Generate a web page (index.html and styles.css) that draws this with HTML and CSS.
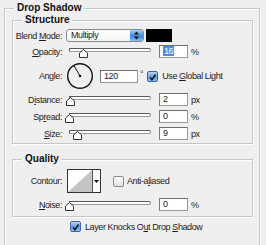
FILE: index.html
```html
<!DOCTYPE html>
<html>
<head>
<meta charset="utf-8">
<link rel="stylesheet" href="styles.css">
</head>
<body>
<div class="panel">
  <div class="legend">Drop Shadow</div>
  <div class="box structure">
    <div class="legend">Structure</div>
    <div class="row r-blend">
      <span class="label">Blend <span class="u">M</span>ode:</span>
      <div class="select">
        <span class="select-text">Multiply</span>
        <span class="stepper"><svg width="13" height="11" viewBox="0 0 13 11"><path d="M6.5 1.5 L9 4.5 H4 Z M6.5 9.5 L9 6.5 H4 Z" fill="#111"/></svg></span>
      </div>
      <div class="swatch"></div>
    </div>
    <div class="row r-opacity">
      <span class="label"><span class="u">O</span>pacity:</span>
      <div class="slider"><div class="track"></div><svg class="thumb" style="left:9.5px" width="9" height="9" viewBox="0 0 9 9"><path d="M4.5 0.5 L8.5 4 V8.5 H0.5 V4 Z" fill="#fff" stroke="#333"/></svg></div>
      <div class="field"><span class="sel">16</span></div>
      <span class="unit">%</span>
    </div>
    <div class="row r-angle">
      <span class="label">Angle:</span>
      <svg class="dial" width="28" height="28" viewBox="0 0 28 28"><circle cx="14" cy="14" r="12.3" fill="none" stroke="#111" stroke-width="1.4"/><line x1="14" y1="14" x2="8" y2="3.6" stroke="#111" stroke-width="1"/><circle cx="14" cy="14" r="1.3" fill="#111"/></svg>
      <div class="field field-angle">120</div>
      <span class="deg">°</span>
      <span class="check checked"><svg width="11" height="11" viewBox="0 0 11 11"><path d="M2.5 5.5 L4.8 8.3 L9.2 1.8" fill="none" stroke="#111" stroke-width="1.8"/></svg></span>
      <span class="check-label">Use <span class="u">G</span>lobal Light</span>
    </div>
    <div class="row r-slider">
      <span class="label">D<span class="u">i</span>stance:</span>
      <div class="slider"><div class="track"></div><svg class="thumb" style="left:-3.5px" width="9" height="9" viewBox="0 0 9 9"><path d="M4.5 0.5 L8.5 4 V8.5 H0.5 V4 Z" fill="#fff" stroke="#333"/></svg></div>
      <div class="field">2</div>
      <span class="unit">px</span>
    </div>
    <div class="row r-slider">
      <span class="label">Sp<span class="u">r</span>ead:</span>
      <div class="slider"><div class="track"></div><svg class="thumb" style="left:-4.5px" width="9" height="9" viewBox="0 0 9 9"><path d="M4.5 0.5 L8.5 4 V8.5 H0.5 V4 Z" fill="#fff" stroke="#333"/></svg></div>
      <div class="field">0</div>
      <span class="unit">%</span>
    </div>
    <div class="row r-slider">
      <span class="label"><span class="u">S</span>ize:</span>
      <div class="slider"><div class="track"></div><svg class="thumb" style="left:3.5px" width="9" height="9" viewBox="0 0 9 9"><path d="M4.5 0.5 L8.5 4 V8.5 H0.5 V4 Z" fill="#fff" stroke="#333"/></svg></div>
      <div class="field">9</div>
      <span class="unit">px</span>
    </div>
  </div>
  <div class="box quality">
    <div class="legend">Quality</div>
    <div class="row r-contour">
      <span class="label">Contour:</span>
      <div class="contour">
        <svg class="curve" width="24" height="22" viewBox="0 0 24 22"><rect width="24" height="22" fill="#fff"/><path d="M0 22 L24 0 V22 Z" fill="#c4c4c4"/></svg>
        <span class="contour-arrow"><svg width="7" height="6" viewBox="0 0 7 6"><path d="M1 2 H6 L3.5 5 Z" fill="#111"/></svg></span>
      </div>
      <span class="check"></span>
      <span class="check-label">Anti-a<span class="u">l</span>iased</span>
    </div>
    <div class="row r-noise">
      <span class="label"><span class="u">N</span>oise:</span>
      <div class="slider"><div class="track"></div><svg class="thumb" style="left:-4.5px" width="9" height="9" viewBox="0 0 9 9"><path d="M4.5 0.5 L8.5 4 V8.5 H0.5 V4 Z" fill="#fff" stroke="#333"/></svg></div>
      <div class="field">0</div>
      <span class="unit">%</span>
    </div>
  </div>
  <div class="row r-knock">
    <span class="check checked"><svg width="11" height="11" viewBox="0 0 11 11"><path d="M2.5 5.5 L4.8 8.3 L9.2 1.8" fill="none" stroke="#111" stroke-width="1.8"/></svg></span>
    <span class="check-label">Layer Knocks O<span class="u">u</span>t Drop <span class="u">S</span>hadow</span>
  </div>
</div>
</body>
</html>
```

FILE: styles.css
```css
html, body {
  margin: 0;
  padding: 0;
  background: #efefef;
  overflow: hidden;
}
body {
  font-family: "Liberation Sans", Arial, sans-serif;
  font-size: 9px;
  letter-spacing: -0.4px;
  color: #1c1c1c;
  width: 266px;
  height: 245px;
}
.panel {
  margin: 8px 6px 0 4px;
  height: 236px;
  border: 1px solid #c6c6c6;
  border-bottom: none;
  box-shadow: inset 1px 1px 0 #fff, 1px 1px 0 #fff;
  padding: 0 6px 0 7px;
}
.legend {
  width: fit-content;
  margin: -7px 0 0 2px;
  padding: 0 3px;
  background: #efefef;
  font-weight: bold;
  font-size: 10px;
  letter-spacing: 0;
  line-height: 12px;
  color: #111;
}
.box {
  border: 1px solid #c6c6c6;
  box-shadow: inset 1px 1px 0 #fff, 1px 1px 0 #fff;
}
.box .legend {
  margin-left: 9px;
}
.structure {
  margin-top: 6px;
  padding-bottom: 3px;
}
.quality {
  margin-top: 15px;
  padding-bottom: 5px;
}
.row {
  display: flex;
  align-items: center;
  height: 13px;
}
.label {
  width: 49px;
  flex: none;
  text-align: right;
  white-space: nowrap;
}
.u { text-decoration: underline; }

.r-blend { margin-top: 3px; }
.r-opacity { margin-top: 3px; }
.r-angle { margin-top: 4px; height: 28px; }
.r-slider { margin-top: 4px; }
.r-angle + .r-slider { margin-top: 3px; }
.r-contour { margin-top: 4px; height: 24px; }
.r-noise { margin-top: 5px; }
.r-knock { margin: 4px 0 0 58px; height: 11px; }

.select {
  margin-left: 4px;
  width: 78px;
  height: 13px;
  box-sizing: border-box;
  border: 1px solid #8a8a8a;
  border-radius: 3px;
  background: linear-gradient(#fff, #f4f4f4);
  display: flex;
  align-items: center;
  overflow: hidden;
}
.select-text {
  flex: 1;
  padding-left: 4px;
  line-height: 11px;
}
.stepper {
  width: 13px;
  height: 11px;
  background: linear-gradient(#a8cdf5, #4a8fe0 50%, #3a7fd6 51%, #86c0f5);
  display: flex;
}
.swatch {
  margin-left: 2px;
  width: 26px;
  height: 13px;
  background: #000;
}

.slider {
  position: relative;
  margin-left: 7px;
  width: 82px;
  height: 13px;
  flex: none;
}
.track {
  margin-top: 3px;
  height: 4px;
  box-sizing: border-box;
  border: 1px solid #5c5c5c;
  border-bottom-color: #9a9a9a;
  border-right-color: #8a8a8a;
  border-radius: 0 2px 2px 0;
  background: #fff;
}
.thumb {
  position: absolute;
  top: 4px;
}
.field {
  margin-left: 8px;
  width: 29px;
  height: 13px;
  box-sizing: border-box;
  border: 1px solid #9a9a9a;
  border-top-color: #6e6e6e;
  border-left-color: #7c7c7c;
  background: #fff;
  padding-left: 3px;
  line-height: 11px;
  flex: none;
}
.sel {
  display: inline-block;
  background: #4f8ad9;
  color: #fff;
  padding: 0 1px;
  line-height: 10px;
}
.unit {
  margin-left: 3px;
}
.dial {
  margin-left: 4px;
  flex: none;
}
.field-angle {
  margin-left: 6px;
  width: 38px;
}
.deg {
  margin-left: 2px;
  align-self: flex-start;
  margin-top: 7px;
}
.check {
  width: 11px;
  height: 11px;
  box-sizing: border-box;
  border: 1px solid #8c8c8c;
  border-radius: 2px;
  background: linear-gradient(#fdfdfd, #e2e2e2);
  flex: none;
  display: flex;
}
.check.checked {
  border-color: #3a66a8;
  background: linear-gradient(#bcd9f7, #5d9be4 55%, #8fc2f3);
}
.r-angle .check { margin-left: 4px; }
.check-label { margin-left: 4px; white-space: nowrap; }
.r-contour .check { margin-left: 12px; }
.r-contour .check-label { margin-left: 3px; }

.contour {
  margin-left: 5px;
  width: 34px;
  height: 24px;
  box-sizing: border-box;
  border: 1px solid #333;
  display: flex;
  background: #fff;
  flex: none;
}
.curve { display: block; }
.contour-arrow {
  flex: 1;
  border-left: 1px solid #555;
  display: flex;
  align-items: center;
  justify-content: center;
  background: #fafafa;
}
```
